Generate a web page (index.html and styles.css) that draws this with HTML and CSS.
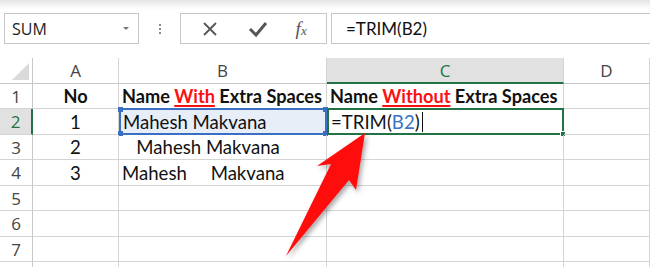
FILE: index.html
```html
<!DOCTYPE html>
<html>
<head>
<meta charset="utf-8">
<link rel="stylesheet" href="styles.css">
</head>
<body>
<div class="app">
  <div class="toolbar">
    <div class="namebox"><span class="nb-text">SUM</span><span class="nb-arrow"></span></div>
    <div class="grip"><i></i><i></i><i></i></div>
    <div class="fbtns">
      <svg class="ico" width="20" height="20" viewBox="0 0 20 20"><path d="M4 4 L16 16 M16 4 L4 16" stroke="#555" stroke-width="1.8" fill="none"/></svg>
      <svg class="ico" width="22" height="20" viewBox="0 0 22 20"><path d="M3 10 L9 16 L19 4" stroke="#555" stroke-width="3" fill="none" stroke-linejoin="miter"/></svg>
      <span class="fx">f<sub>x</sub></span>
    </div>
    <div class="fbar">=TRIM(B2)</div>
  </div>
  <div class="sheet">
    <div class="grid">
      <div class="corner"><span class="tri"></span></div>
      <div class="ch">A</div>
      <div class="ch">B</div>
      <div class="ch sel">C</div>
      <div class="ch">D</div>

      <div class="rh">1</div>
      <div class="c ctr b"><span>No</span></div>
      <div class="c b"><span>Name <span class="red">With</span> Extra Spaces</span></div>
      <div class="c b"><span>Name <span class="red">Without</span> Extra Spaces</span></div>
      <div class="c"></div>

      <div class="rh sel">2</div>
      <div class="c ctr"><span>1</span></div>
      <div class="c ref"><span>Mahesh Makvana</span><span class="h tl"></span><span class="h tr"></span><span class="h bl"></span><span class="h br"></span></div>
      <div class="c active"><span>=TRIM(<span class="blue">B2</span>)</span><span class="caret"></span><span class="gh"></span></div>
      <div class="c"></div>

      <div class="rh">3</div>
      <div class="c ctr"><span>2</span></div>
      <div class="c pre"><span>   Mahesh Makvana</span></div>
      <div class="c"></div>
      <div class="c"></div>

      <div class="rh">4</div>
      <div class="c ctr"><span>3</span></div>
      <div class="c pre"><span>Mahesh     Makvana</span></div>
      <div class="c"></div>
      <div class="c"></div>

      <div class="rh">5</div><div class="c"></div><div class="c"></div><div class="c"></div><div class="c"></div>
      <div class="rh">6</div><div class="c"></div><div class="c"></div><div class="c"></div><div class="c"></div>
      <div class="rh">7</div><div class="c"></div><div class="c"></div><div class="c"></div><div class="c"></div>
      <div class="rh"></div><div class="c"></div><div class="c"></div><div class="c"></div><div class="c"></div>
    </div>
    <svg class="arrow" width="650" height="267" viewBox="0 0 650 267">
      <defs>
        <filter id="sh" x="-20%" y="-20%" width="140%" height="140%">
          <feDropShadow dx="2" dy="3" stdDeviation="2.5" flood-color="#000" flood-opacity="0.35"/>
        </filter>
      </defs>
      <path d="M286 256 L331 164 L317 166 L365 133 L356 190 L349 180 Z" fill="#ff0a0a" filter="url(#sh)"/>
    </svg>
  </div>
</div>
</body>
</html>
```
FILE: styles.css
```css
* { box-sizing: border-box; }
html, body { margin: 0; padding: 0; }
body { width: 650px; height: 267px; overflow: hidden; background: #fff; font-family: "Lato", "Open Sans", sans-serif; }
.app { position: relative; width: 650px; height: 267px; overflow: hidden; }
.toolbar {
  height: 58px;
  padding: 13px 0 0 4px;
  display: flex;
  align-items: flex-start;
  background: linear-gradient(to bottom, #e4e4e4 0px, #f6f6f6 6px, #fff 10px, #fff 100%);
}
.namebox {
  width: 135px; height: 31px;
  border: 1px solid #c6c6c6;
  background: #fff;
  display: flex; align-items: center; justify-content: space-between;
  padding: 0 9px 0 7px;
}
.nb-text { font-family: "Open Sans", sans-serif; font-size: 16px; color: #222; }
.nb-arrow { width: 0; height: 0; border-left: 3px solid transparent; border-right: 3px solid transparent; border-top: 3px solid #777; }
.grip { width: 41px; height: 31px; display: flex; flex-direction: column; align-items: center; justify-content: center; gap: 2px; }
.grip i { display: block; width: 2px; height: 2px; background: #888; }
.fbtns {
  width: 147px; height: 31px;
  border: 1px solid #c6c6c6;
  background: #fff;
  display: flex; align-items: center; justify-content: space-around;
  padding: 0 6px 0 6px;
}
.fx { font-family: "Liberation Serif", serif; font-style: italic; font-size: 19px; color: #555; line-height: 1; }
.fx sub { font-size: 13px; vertical-align: baseline; position: relative; top: 0; }
.fbar {
  margin-left: 4px;
  flex: 1; height: 31px;
  border: 1px solid #c6c6c6; border-right: none;
  background: #fff;
  padding: 0 0 0 14px;
  display: flex; align-items: center;
  font-size: 17px; color: #111;
}
.sheet { position: relative; }
.grid {
  display: grid;
  grid-template-columns: 33px 86px 208px 237px 86px;
  grid-template-rows: 26px 25px 26px 25px 26px 25px 26px 25px 26px;
}
.corner { position: relative; background: #fff; border-right: 1px solid #c8c8c8; border-bottom: 1px solid #c8c8c8; }
.tri { position: absolute; right: 3px; bottom: 3px; width: 0; height: 0; border-left: 17px solid transparent; border-bottom: 17px solid #dadada; }
.ch {
  background: #fff; color: #444; font-size: 17px;
  border-right: 1px solid #d4d4d4; border-bottom: 1px solid #c8c8c8;
  display: flex; align-items: center; justify-content: center;
  font-family: "Open Sans", sans-serif;
}
.ch.sel { background: #e1e1e1; color: #217346; border-bottom: 2px solid #217346; }
.rh {
  background: #fff; color: #444; font-size: 17px;
  border-right: 1px solid #c8c8c8; border-bottom: 1px solid #d4d4d4;
  display: flex; align-items: center; justify-content: center;
  font-family: "Open Sans", sans-serif;
}
.rh.sel { background: #e1e1e1; color: #217346; border-right: 2px solid #217346; }
.c {
  position: relative;
  border-right: 1px solid #d4d4d4; border-bottom: 1px solid #d4d4d4;
  font-size: 18.6px; color: #111;
  display: flex; align-items: center;
  padding-left: 3px;
  white-space: nowrap;
}
.ctr { justify-content: center; padding-left: 0; }
.b { font-weight: bold; font-size: 18.2px; }
.pre { white-space: pre; }
.red { color: #ff1010; text-decoration: underline; text-decoration-thickness: 1.5px; text-underline-offset: 2px; }
.blue { color: #3a72c4; }
.ref { background: #e8eef8; border: 2px solid #3a6fc4; margin-top: -1px; padding-left: 2px; }
.h { position: absolute; width: 5px; height: 5px; background: #3a6fc4; }
.h.tl { left: -3px; top: -3px; }
.h.tr { right: -3px; top: -3px; }
.h.bl { left: -3px; bottom: -3px; }
.h.br { right: -3px; bottom: -3px; }
.active { border: 2px solid #217346; margin-top: -1px; padding-left: 2px; }
.caret { display: inline-block; width: 1px; height: 20px; background: #111; margin-left: 2px; }
.gh { position: absolute; right: -4px; bottom: -4px; width: 6px; height: 6px; background: #217346; border: 1px solid #fff; }
.arrow { position: absolute; left: 0; top: -58px; pointer-events: none; }
```
